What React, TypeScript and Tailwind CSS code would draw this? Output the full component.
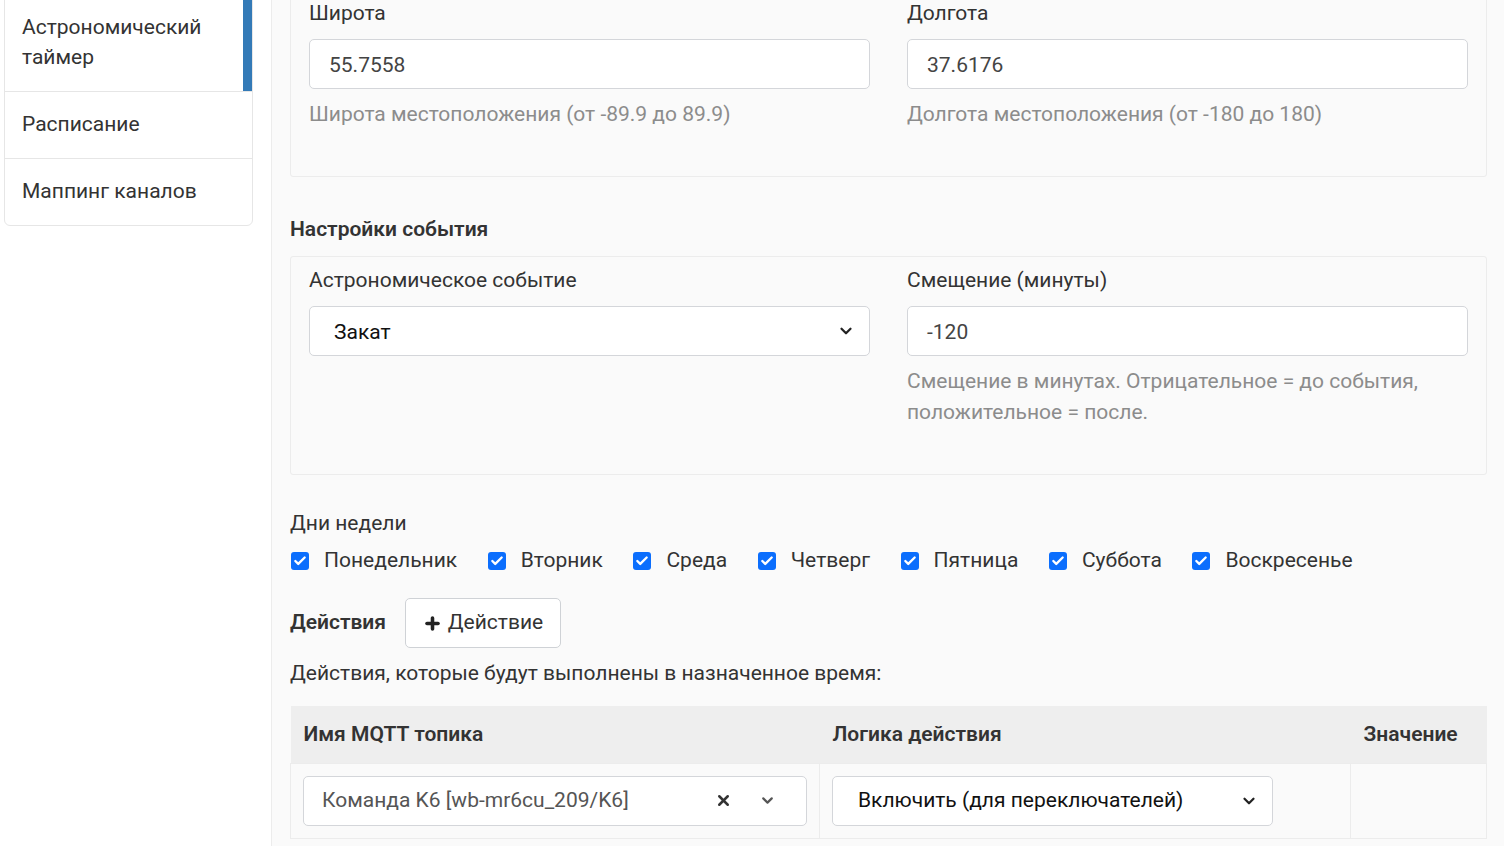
import { Check, ChevronDown, Plus, X } from 'lucide-react';

const days = ['Понедельник', 'Вторник', 'Среда', 'Четверг', 'Пятница', 'Суббота', 'Воскресенье'];

function Chevron({ className = '' }: { className?: string }) {
    return <ChevronDown className={className} size={18} strokeWidth={3} />;
}

function Field({ label, value, help }: { label: string; value: string; help?: string[] }) {
    return (
        <div className="flex flex-col">
            <div className="h-[30px] leading-[30px] text-[#333]">{label}</div>
            <div className="mt-[11px] h-[50px] rounded-[5px] border border-[#d4d6da] bg-white px-[19px] pt-[3px] flex items-center text-[#444]">
                {value}
            </div>
            {help && (
                <div className="mt-[10px] text-[#8c8c8c] leading-[31px]">
                    {help.map((h) => (
                        <div key={h}>{h}</div>
                    ))}
                </div>
            )}
        </div>
    );
}

function SelectField({ label, value }: { label: string; value: string }) {
    return (
        <div className="flex flex-col">
            <div className="h-[30px] leading-[30px] text-[#333]">{label}</div>
            <div className="mt-[11px] h-[50px] rounded-[5px] border border-[#d4d6da] bg-white pl-[24px] pr-[14px] flex items-center justify-between text-[#111]">
                <span className="pt-[3px]">{value}</span>
                <Chevron className="text-[#222]" />
            </div>
        </div>
    );
}

export default function App() {
    return (
        <div className="h-[846px] overflow-hidden flex bg-white text-[21px] font-['Roboto',sans-serif]">
            {/* sidebar */}
            <aside className="w-[271px] shrink-0 pl-[4px] pr-[18px]">
                <div className="-mt-[8px] rounded-b-[6px] border border-[#e6e6e6] bg-white">
                    <div className="flex border-b border-[#e6e6e6]">
                        <div className="flex-1 pl-[17px] py-[19px] leading-[30px] text-[#333]">
                            Астрономический таймер
                        </div>
                        <div className="w-[9px] bg-[#337ab7]" />
                    </div>
                    <div className="h-[67px] flex items-center pl-[17px] border-b border-[#e6e6e6] text-[#333]">
                        Расписание
                    </div>
                    <div className="h-[66px] flex items-center pl-[17px] text-[#333]">Маппинг каналов</div>
                </div>
            </aside>

            {/* content */}
            <main className="flex-1 min-w-0 border-l border-[#ececec] bg-[#fafafa] pl-[18px] pr-[17px]">
                <section className="-mt-[12px] border border-[#ececec] rounded-[3px] px-[18px] pt-[9px] pb-[46px] grid grid-cols-2 gap-x-[37px]">
                    <Field label="Широта" value="55.7558" help={['Широта местоположения (от -89.9 до 89.9)']} />
                    <Field label="Долгота" value="37.6176" help={['Долгота местоположения (от -180 до 180)']} />
                </section>

                <h3 className="mt-[37px] h-[30px] leading-[30px] font-semibold text-[#333]">Настройки события</h3>

                <section className="mt-[12px] border border-[#ececec] rounded-[3px] px-[18px] pt-[8px] pb-[46px] grid grid-cols-2 gap-x-[37px] items-start">
                    <SelectField label="Астрономическое событие" value="Закат" />
                    <Field
                        label="Смещение (минуты)"
                        value="-120"
                        help={['Смещение в минутах. Отрицательное = до события,', 'положительное = после.']}
                    />
                </section>

                <div className="mt-[33px] h-[30px] leading-[30px] text-[#333]">Дни недели</div>
                <div className="mt-[8px] h-[30px] flex items-center gap-x-[29.6px]">
                    {days.map((d) => (
                        <label key={d} className="flex items-center gap-[15px] text-[#333]">
                            <span className="w-[18px] h-[18px] rounded-[3px] bg-[#0b6efd] flex items-center justify-center ml-[1px]">
                                <Check size={14} strokeWidth={4} className="text-white" />
                            </span>
                            {d}
                        </label>
                    ))}
                </div>

                <div className="mt-[22px] flex items-center gap-[19px]">
                    <span className="font-semibold text-[#333]">Действия</span>
                    <button className="h-[50px] w-[156px] rounded-[5px] border border-[#cfd2d6] bg-white flex items-center justify-center gap-[6px] text-[#333]">
                        <Plus size={19} strokeWidth={4.5} className="text-[#222]" />
                        Действие
                    </button>
                </div>

                <div className="mt-[10px] h-[30px] leading-[30px] text-[#333]">
                    Действия, которые будут выполнены в назначенное время:
                </div>

                <table className="mt-[18px] w-full border-collapse">
                    <thead>
                        <tr className="bg-[#eeeeee] h-[57px] text-left">
                            <th className="w-[529px] px-[13px] font-semibold text-[#333]">Имя MQTT топика</th>
                            <th className="w-[531px] px-[13px] font-semibold text-[#333]">Логика действия</th>
                            <th className="px-[13px] font-semibold text-[#333]">Значение</th>
                        </tr>
                    </thead>
                    <tbody>
                        <tr className="h-[75px]">
                            <td className="border border-[#ececec] px-[12px]">
                                <div className="w-[504px] h-[50px] rounded-[5px] border border-[#d4d6da] bg-white pl-[18px] pr-[30px] flex items-center text-[#555]">
                                    <span className="flex-1">Команда K6 [wb-mr6cu_209/K6]</span>
                                    <X size={17} strokeWidth={3.5} className="text-[#333] mr-[27px]" />
                                    <ChevronDown size={17} strokeWidth={3} className="text-[#555]" />
                                </div>
                            </td>
                            <td className="border border-[#ececec] px-[12px]">
                                <div className="w-[441px] h-[50px] rounded-[5px] border border-[#d4d6da] bg-white pl-[25px] pr-[14px] flex items-center justify-between text-[#111]">
                                    <span>Включить (для переключателей)</span>
                                    <Chevron className="text-[#222]" />
                                </div>
                            </td>
                            <td className="border border-[#ececec]" />
                        </tr>
                    </tbody>
                </table>
            </main>
        </div>
    );
}
